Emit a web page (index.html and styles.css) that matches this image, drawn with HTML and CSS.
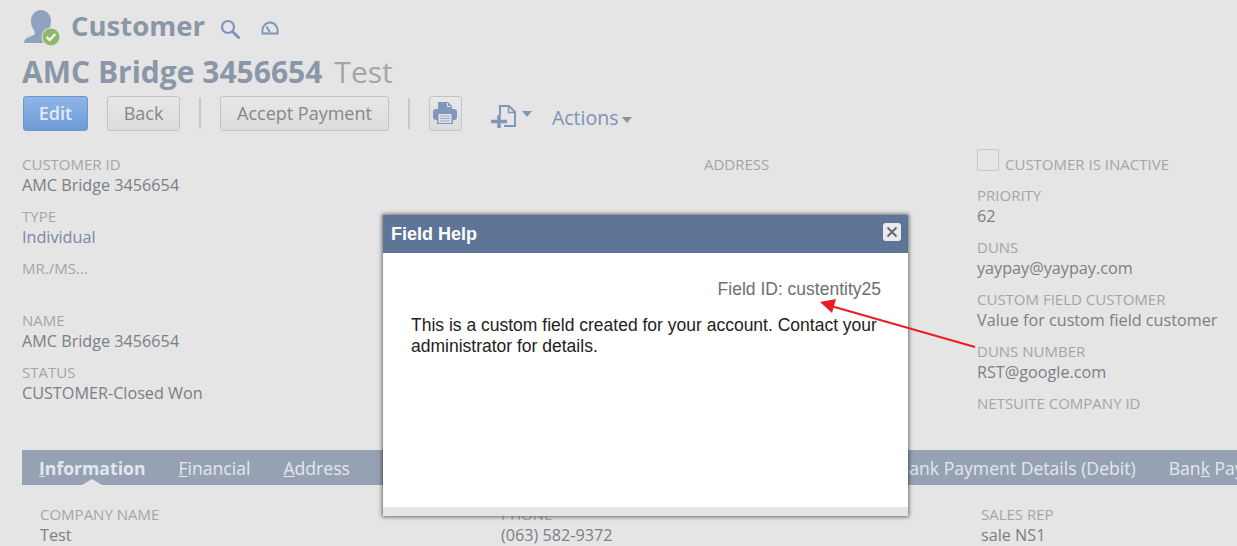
FILE: index.html
```html
<!DOCTYPE html>
<html lang="en">
<head>
  <meta charset="UTF-8">
  <title>Customer</title>
  <link rel="stylesheet" href="styles.css">
</head>
<body>
  <div class="page">
    <div class="title-row">
      <svg class="customer-icon" width="40" height="38" viewBox="0 0 40 38">
        <path d="M2 35c0-3 2-5 5-6l5-2c1-1 1-3 0-5-2-2-3-5-3-9 0-6 4-11 10-11s10 5 10 11c0 4-1 7-3 9-1 2-1 4 0 5l2 1-4 7z" fill="#8fa3c0"/>
        <circle cx="29" cy="29" r="9.500" fill="#e5e5e5"/>
        <circle cx="29" cy="29" r="8.500" fill="#8fb96a"/>
        <path d="M24.500 29l3.200 3 5.500-6" fill="none" stroke="#eef3ea" stroke-width="2.500"/>
      </svg>
      <span class="page-type">Customer</span>
      <svg class="title-tool" width="22" height="22" viewBox="0 0 22 22">
        <circle cx="9" cy="9" r="6" fill="none" stroke="#7f97bb" stroke-width="2.200"/>
        <path d="M13.500 13.500l6 6" stroke="#7f97bb" stroke-width="3" stroke-linecap="round"/>
      </svg>
      <svg class="title-tool gauge" width="18" height="14" viewBox="0 0 18 14">
        <path d="M1.500 12.500c-1-6 2.500-11 7.500-11s8.500 5 7.500 11z" fill="none" stroke="#7f97bb" stroke-width="2"/>
        <path d="M5.500 5.500l3.500 6" stroke="#7f97bb" stroke-width="2"/>
      </svg>
    </div>

    <div class="record-row">
      <span class="record-name">AMC Bridge 3456654</span>
      <span class="record-sub">Test</span>
    </div>

    <div class="button-row">
      <button class="btn btn-primary">Edit</button>
      <button class="btn btn-back">Back</button>
      <span class="divider"></span>
      <button class="btn">Accept Payment</button>
      <span class="divider"></span>
      <button class="btn btn-icon">
        <svg width="26" height="26" viewBox="0 0 26 26">
          <path d="M6 1h10l4 4v5H6z" fill="#7f97bb"/>
          <path d="M15.500 2v3.500H19" fill="none" stroke="#e5e5e5"/>
          <rect x="1" y="8" width="24" height="11" rx="3" fill="#7f97bb"/>
          <rect x="5" y="12" width="16" height="11" fill="#7f97bb"/>
          <rect x="6.500" y="13" width="13" height="9" fill="#dfe3e8"/>
          <path d="M8 15h10M8 17.500h10M8 20h10" stroke="#9aaac2" stroke-width="1"/>
        </svg>
      </button>
      <span class="new-menu">
        <svg width="26" height="25" viewBox="0 0 26 25">
          <path d="M10 11V2h9l6 6v14H14" fill="none" stroke="#7f97bb" stroke-width="2"/>
          <path d="M18.500 2v6.500H25" fill="none" stroke="#7f97bb" stroke-width="1.500"/>
          <path d="M1 17.500h16M9 11v13" stroke="#7f97bb" stroke-width="3.500"/>
        </svg>
        <i class="caret caret-blue"></i>
      </span>
      <span class="actions">Actions<i class="caret"></i></span>
    </div>

    <div class="fields">
      <div class="field-col">
        <div class="field"><div class="label">CUSTOMER ID</div><div class="value">AMC Bridge 3456654</div></div>
        <div class="field"><div class="label">TYPE</div><div class="value link">Individual</div></div>
        <div class="field"><div class="label">MR./MS...</div><div class="value">&nbsp;</div></div>
        <div class="field"><div class="label">NAME</div><div class="value">AMC Bridge 3456654</div></div>
        <div class="field"><div class="label">STATUS</div><div class="value">CUSTOMER-Closed Won</div></div>
      </div>
      <div class="field-col">
        <div class="field"><div class="label">ADDRESS</div></div>
      </div>
      <div class="field-col">
        <div class="check-row"><span class="checkbox"></span><span class="label">CUSTOMER IS INACTIVE</span></div>
        <div class="field"><div class="label">PRIORITY</div><div class="value">62</div></div>
        <div class="field"><div class="label">DUNS</div><div class="value">yaypay@yaypay.com</div></div>
        <div class="field"><div class="label">CUSTOM FIELD CUSTOMER</div><div class="value">Value for custom field customer</div></div>
        <div class="field"><div class="label">DUNS NUMBER</div><div class="value">RST@google.com</div></div>
        <div class="field"><div class="label">NETSUITE COMPANY ID</div></div>
      </div>
    </div>

    <div class="tabs">
      <span class="tab active"><u>I</u>nformation</span>
      <span class="tab"><u>F</u>inancial</span>
      <span class="tab"><u>A</u>ddress</span>
      <span class="tab tab-hidden">A</span>
      <span class="tab">Bank Payment Details (Debit)</span>
      <span class="tab">Ban<u>k</u> Payment Details (Credit)</span>
    </div>

    <div class="sub-fields">
      <div class="field"><div class="label">COMPANY NAME</div><div class="value">Test</div></div>
      <div class="field"><div class="label">PHONE</div><div class="value">(063) 582-9372</div></div>
      <div class="field"><div class="label">SALES REP</div><div class="value">sale NS1</div></div>
    </div>
  </div>

  <div class="modal">
    <div class="modal-head">
      <span>Field Help</span>
      <span class="modal-close">
        <svg width="12" height="12" viewBox="0 0 12 12"><path d="M1.500 1.500l9 9M10.500 1.500l-9 9" stroke="#667" stroke-width="2"/></svg>
      </span>
    </div>
    <div class="modal-body">
      <div class="field-id">Field ID: custentity25</div>
      <p>This is a custom field created for your account. Contact your administrator for details.</p>
    </div>
    <div class="modal-foot"></div>
  </div>

  <svg class="arrow" width="170" height="60" viewBox="0 0 170 60">
    <path d="M158 52L14 11" stroke="#ea1c24" stroke-width="2"/>
    <path d="M3 7l16-3-4 14z" fill="#ea1c24"/>
  </svg>
</body>
</html>
```

FILE: styles.css
```css
html, body {
  margin: 0;
  height: 546px;
  overflow: hidden;
}

body {
  background: #e5e5e5;
  font-family: "Open Sans", Arial, sans-serif;
  color: #7b8085;
  position: relative;
}

.page {
  padding: 8px 0 0 22px;
}

.title-row {
  display: flex;
  align-items: center;
  height: 38px;
}

.customer-icon {
  margin-right: 9px;
}

.page-type {
  margin-bottom: 4px;
  font-size: 27.5px;
  font-weight: 700;
  color: #8a97a8;
}

.title-tool {
  margin-left: 14px;
  margin-top: 3px;
}

.title-tool.gauge {
  margin-left: 20px;
  margin-top: 2px;
}

.record-row {
  display: flex;
  align-items: baseline;
  gap: 12px;
  height: 50px;
  line-height: 52px;
}

.record-name {
  font-size: 30px;
  font-weight: 700;
  color: #8a97a8;
}

.record-sub {
  font-size: 30px;
  color: #a3a6a9;
}

.button-row {
  display: flex;
  align-items: center;
  margin-left: 1px;
  height: 35px;
}

.btn {
  height: 35px;
  padding: 0 16px 2px;
  border: 1px solid #c4c4c4;
  border-radius: 3px;
  background: linear-gradient(#e8e8e8, #dcdcdc);
  font-family: inherit;
  font-size: 18px;
  color: #85888b;
}

.btn-primary {
  width: 65px;
  padding: 0 0 2px;
  margin-right: 19px;
  background: linear-gradient(#8fb6e6, #6d9bd8);
  border-color: #6f97c9;
  color: #e4eaf2;
  font-weight: 600;
}

.btn-back {
  width: 73px;
  padding: 0 0 2px;
}

.divider {
  width: 2px;
  height: 31px;
  margin: 0 19px;
  background: #c8c8c8;
}

.btn-icon {
  width: 33px;
  padding: 0;
  display: flex;
  align-items: center;
  justify-content: center;
}

.new-menu {
  display: flex;
  align-items: center;
  margin-left: 28px;
  margin-top: 5px;
}

.caret {
  display: inline-block;
  width: 0;
  height: 0;
  margin-left: 4px;
  border-left: 5px solid transparent;
  border-right: 5px solid transparent;
  border-top: 6px solid #8c93a0;
}

.caret-blue {
  margin-left: 6px;
  margin-bottom: 4px;
  border-top-color: #7f97bb;
}

.actions {
  margin-left: 20px;
  margin-top: 8px;
  font-size: 19.5px;
  color: #7b93b8;
}

.actions .caret {
  vertical-align: 2px;
}

.fields {
  display: grid;
  grid-template-columns: 682px 273px 1fr;
  margin-top: 23px;
  height: 296px;
}

.check-row {
  display: flex;
  align-items: flex-end;
  gap: 6px;
  height: 22px;
  margin-top: -5px;
  margin-bottom: 14px;
}

.checkbox {
  width: 20px;
  height: 20px;
  border: 1px solid #c8c8c8;
}

.check-row .label {
  margin-bottom: -4px;
}

.field {
  height: 52px;
}

.label {
  font-size: 15px;
  line-height: 21px;
  color: #a3a5a7;
}

.value {
  font-size: 16.2px;
  line-height: 21px;
  color: #7b8085;
}

.value.link {
  color: #7d85a6;
}

.tabs {
  display: flex;
  gap: 33px;
  height: 35px;
  padding-left: 17px;
  background: #96a2b4;
  font-size: 17.6px;
  line-height: 37px;
  color: #e3e7ec;
  white-space: nowrap;
  overflow: hidden;
}

.tab {
  position: relative;
  flex-shrink: 0;
}

.tab-hidden {
  width: 482px;
}

.tab.active {
  font-weight: 700;
}

.tab.active::after {
  content: "";
  position: absolute;
  left: 50%;
  bottom: 0;
  margin-left: -10px;
  border-left: 10px solid transparent;
  border-right: 10px solid transparent;
  border-bottom: 6px solid #e5e5e5;
}

.sub-fields {
  display: grid;
  grid-template-columns: 461px 480px 1fr;
  margin-top: 19px;
  padding-left: 18px;
}

.modal {
  position: absolute;
  left: 383px;
  top: 215px;
  width: 525px;
  height: 301px;
  display: flex;
  flex-direction: column;
  background: #fff;
  box-shadow: 0 0 4px 1px rgba(0, 0, 0, 0.55);
  font-family: "Liberation Sans", Arial, sans-serif;
}

.modal-head {
  display: flex;
  align-items: center;
  justify-content: space-between;
  height: 38px;
  padding: 0 7px 0 8px;
  background: #5f7597;
  color: #fff;
  font-size: 18px;
  font-weight: 700;
}

.modal-close {
  display: flex;
  align-items: center;
  justify-content: center;
  width: 18px;
  height: 18px;
  margin-bottom: 4px;
  border-radius: 3px;
  background: #e9ebef;
}

.modal-body {
  flex: 1;
  padding: 26px 27px 0 28px;
  font-size: 17.5px;
  line-height: 21px;
}

.field-id {
  text-align: right;
  color: #6f6f6f;
}

.modal-body p {
  margin: 15px 0 0;
  color: #222;
}

.modal-foot {
  height: 9px;
  background: #e5e5e5;
}

.arrow {
  position: absolute;
  left: 817px;
  top: 295px;
}
```
